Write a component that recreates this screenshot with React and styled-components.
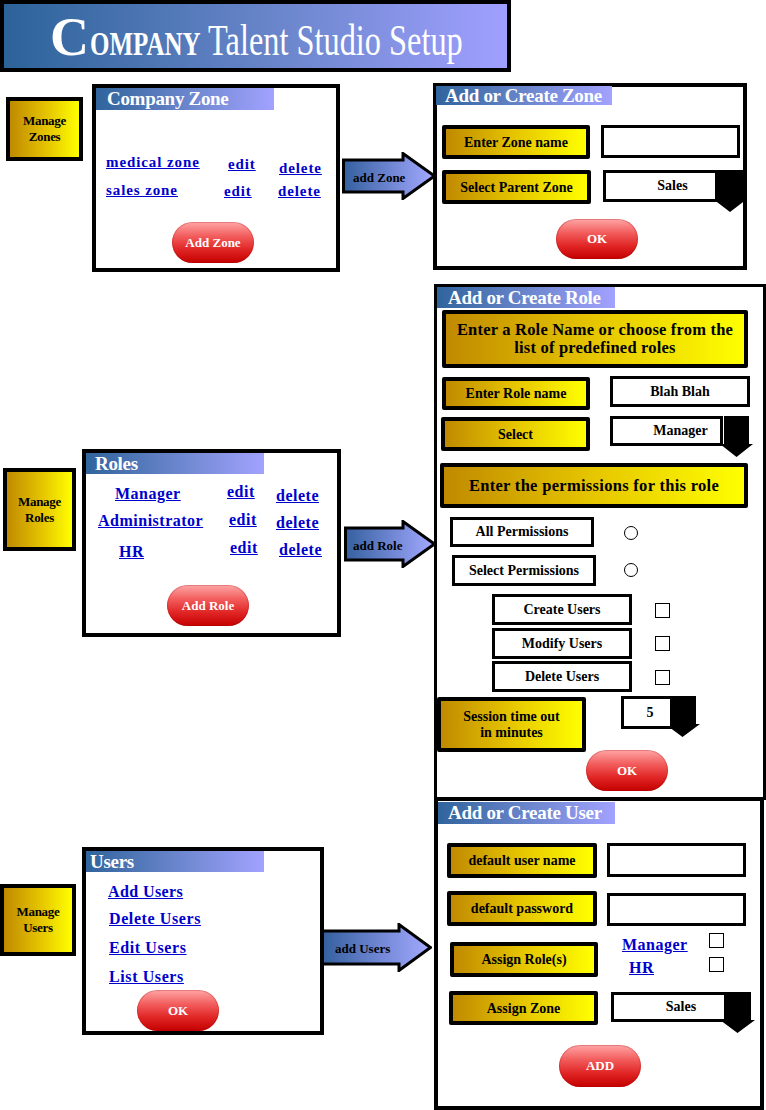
import React from 'react';
import styled, { createGlobalStyle, css } from 'styled-components';

const GlobalStyle = createGlobalStyle`
  html, body {
    margin: 0;
    padding: 0;
    background: #fff;
  }
  body {
    font-family: "Liberation Serif", "Times New Roman", serif;
    color: #000;
  }
`

// margins used to set each part where the mockup draws it
const place = css`
  margin-left: ${ props => props.$ml || 0 }px;
  margin-top: ${ props => props.$mt || 0 }px;
`

const Page = styled.div`
  width: 766px;
  height: 1110px;
  overflow: hidden;
`
const Header = styled.div`
  box-sizing: border-box;
  width: 511px;
  height: 72px;
  border: 4px solid #000;
  background: linear-gradient(to right, #2c6399, #6b86cc 55%, #a0a0ff);
  display: flex;
  align-items: baseline;
  padding: 7px 0 0 46px;
  color: #fff;
  white-space: nowrap;
  overflow: hidden;
`
const BigC = styled.span`
  font-size: 54px;
  font-weight: bold;
  line-height: 52px;
`
const Squeezed = styled.span`
  display: inline-block;
  transform: scaleX(0.735);
  transform-origin: left center;
  line-height: 44px;
  margin-left: 1px;
`
const Caps = styled.span`
  font-size: 34px;
  font-weight: bold;
`
const Plain = styled.span`
  font-size: 44px;
`

const Section = styled.div`
  display: flex;
  align-items: flex-start;
  height: ${ props => props.$h }px;
  margin-top: ${ props => props.$mt }px;
`
const SideButton = styled.div`
  ${place}
  flex-shrink: 0;
  box-sizing: border-box;
  width: ${ props => props.$w }px;
  height: ${ props => props.$h }px;
  border: 4px solid #000;
  background: linear-gradient(to right, #c08a00, #e6c600 55%, #ffff00);
  display: flex;
  align-items: center;
  justify-content: center;
  text-align: center;
  font-size: 13px;
  font-weight: bold;
  line-height: 16px;
  letter-spacing: -0.3px;
`
const Panel = styled.div`
  ${place}
  flex-shrink: 0;
  box-sizing: border-box;
  width: ${ props => props.$w }px;
  height: ${ props => props.$h }px;
  border: ${ props => props.$b || 4 }px solid #000;
  background: #fff;
  display: flex;
  flex-direction: column;
  align-items: flex-start;
`
const TitleBar = styled.div`
  ${place}
  box-sizing: border-box;
  width: ${ props => props.$w || 178 }px;
  height: ${ props => props.$h || 21 }px;
  line-height: ${ props => props.$h || 21 }px;
  padding-left: ${ props => props.$pl || 10 }px;
  background: linear-gradient(to right, #30649c, #6f88d0 55%, #a2a2ff);
  color: #fff;
  font-size: 19px;
  font-weight: bold;
  letter-spacing: -0.3px;
  white-space: nowrap;
`
const LinkRow = styled.div`
  ${place}
  display: grid;
  grid-template-columns: ${ props => props.$cols };
  align-items: start;
  height: ${ props => props.$h }px;
`
const Link = styled.a`
  display: block;
  justify-self: start;
  margin-left: ${ props => props.$dx || 0 }px;
  margin-top: ${ props => props.$dy || 0 }px;
  color: #0000cc;
  font-size: ${ props => props.$fs || 16 }px;
  line-height: ${ props => props.$lh || 19 }px;
  letter-spacing: ${ props => props.$ls ?? 0.5 }px;
  font-weight: bold;
  text-decoration: underline;
  white-space: nowrap;
  cursor: pointer;
`
const Pill = styled.div`
  ${place}
  flex-shrink: 0;
  width: 82px;
  height: ${ props => props.$h || 41 }px;
  border-radius: 21px;
  background: linear-gradient(to bottom, #ffa6a6 0%, #f25c5c 35%, #e02424 68%, #c40000 100%);
  box-shadow: inset 0 0 0 1px rgba(160, 0, 0, 0.25);
  color: #fff;
  font-size: 13px;
  font-weight: bold;
  display: flex;
  align-items: center;
  justify-content: center;
`
const ArrowWrap = styled.div`
  ${place}
  flex-shrink: 0;
  position: relative;
  z-index: 2;
  width: ${ props => props.$w }px;
  height: ${ props => props.$h }px;
  display: flex;
  align-items: center;
`
const ArrowSvg = styled.svg`
  position: absolute;
  left: 0;
  top: 0;
`
const ArrowLabel = styled.span`
  position: relative;
  padding-left: ${ props => props.$pl }px;
  margin-top: 3px;
  font-size: 13px;
  font-weight: bold;
  white-space: nowrap;
`
const FormRow = styled.div`
  ${place}
  display: flex;
  align-items: flex-start;
  height: ${ props => props.$h }px;
`
const LabelBox = styled.div`
  ${place}
  flex-shrink: 0;
  box-sizing: border-box;
  width: ${ props => props.$w }px;
  height: ${ props => props.$h }px;
  border: 4px solid #000;
  border-radius: 2px;
  background: linear-gradient(to right, #c08a00, #e6c600 50%, #ffff00);
  display: flex;
  align-items: center;
  justify-content: center;
  text-align: center;
  font-size: ${ props => props.$fs || 14 }px;
  line-height: ${ props => props.$lh || 17 }px;
  letter-spacing: ${ props => props.$ls || 0 }px;
  font-weight: bold;
  white-space: nowrap;
`
const Field = styled.div`
  ${place}
  flex-shrink: 0;
  position: relative;
  z-index: 1;
  box-sizing: border-box;
  width: ${ props => props.$w }px;
  height: ${ props => props.$h }px;
  padding-left: ${ props => props.$pl || 0 }px;
  border: 3px solid #000;
  background: #fff;
  display: flex;
  align-items: center;
  justify-content: center;
  font-size: 14px;
  font-weight: bold;
  white-space: nowrap;
`
const DropWrap = styled.div`
  ${place}
  flex-shrink: 0;
  display: flex;
  align-items: flex-start;
`
const DropArrowSvg = styled.svg`
  display: block;
  flex-shrink: 0;
  margin-left: ${ props => props.$ml }px;
`
const Radio = styled.div`
  ${place}
  flex-shrink: 0;
  box-sizing: border-box;
  width: 14px;
  height: 14px;
  border: 1px solid #000;
  border-radius: 50%;
  background: #fff;
`
const Check = styled.div`
  ${place}
  flex-shrink: 0;
  box-sizing: border-box;
  width: 15px;
  height: 15px;
  border: 1px solid #000;
  background: #fff;
`
const RoleChecks = styled.div`
  ${place}
  display: flex;
  flex-direction: column;
`
const RoleCheckRow = styled.div`
  display: grid;
  grid-template-columns: 87px 15px;
  align-items: start;
  height: 24px;
`

function FlowArrow({ id, ml, mt, w, h, pl, children }) {
  let hx = w - 33;
  let bt = Math.round(h / 6);
  let bb = h - bt;
  let points = `1.5,${ bt } ${ hx },${ bt } ${ hx },1.5 ${ w - 1.5 },${ h / 2 } ${ hx },${ h - 1.5 } ${ hx },${ bb } 1.5,${ bb }`;
  return (
    <ArrowWrap $ml={ml} $mt={mt} $w={w} $h={h}>
      <ArrowSvg width={w} height={h} viewBox={`0 0 ${ w } ${ h }`}>
        <defs>
          <linearGradient id={id} x1="0" x2="1" y1="0" y2="0">
            <stop offset="0" stopColor="#34609e" />
            <stop offset="0.55" stopColor="#7388d6" />
            <stop offset="1" stopColor="#a4aaff" />
          </linearGradient>
        </defs>
        <polygon points={points} fill={`url(#${ id })`} stroke="#000" strokeWidth="3" strokeLinejoin="miter" />
      </ArrowSvg>
      <ArrowLabel $pl={pl}>{ children }</ArrowLabel>
    </ArrowWrap>
  );
}

function Dropdown({ ml, mt, w, h, pl, aw, ah, aml, children }) {
  let base = ah - 13;
  let points = `4,0 ${ aw - 4 },0 ${ aw - 4 },${ base } ${ aw },${ base } ${ aw / 2 },${ ah } 0,${ base } 4,${ base }`;
  return (
    <DropWrap $ml={ml} $mt={mt}>
      <Field $w={w} $h={h} $pl={pl}>{ children }</Field>
      <DropArrowSvg $ml={aml} width={aw} height={ah} viewBox={`0 0 ${ aw } ${ ah }`}>
        <polygon points={points} fill="#000" />
      </DropArrowSvg>
    </DropWrap>
  );
}

export default function App() {
  return (
    <Page>
      <GlobalStyle />
      <Header>
        <BigC>C</BigC>
        <Squeezed>
          <Caps>OMPANY</Caps>
          <Plain> Talent Studio Setup</Plain>
        </Squeezed>
      </Header>

      {/* zones */}
      <Section $mt={11} $h={187}>
        <SideButton $ml={6} $mt={14} $w={77} $h={64}>Manage<br />Zones</SideButton>
        <Panel $ml={9} $mt={1} $w={248} $h={188}>
          <TitleBar $h={22} $pl={11}>Company Zone</TitleBar>
          <LinkRow $mt={43} $h={18} $cols="132px 51px auto">
            <Link $fs={15} $lh={18} $ls={0.9} $dx={10}>medical zone</Link>
            <Link $fs={15} $lh={18} $ls={0.9} $dy={2}>edit</Link>
            <Link $fs={15} $lh={18} $ls={0.9} $dy={6}>delete</Link>
          </LinkRow>
          <LinkRow $mt={10} $h={18} $cols="132px 51px auto">
            <Link $fs={15} $lh={18} $ls={0.9} $dx={10}>sales zone</Link>
            <Link $fs={15} $lh={18} $ls={0.9} $dx={-4} $dy={1}>edit</Link>
            <Link $fs={15} $lh={18} $ls={0.9} $dx={-1} $dy={1}>delete</Link>
          </LinkRow>
          <Pill $ml={76} $mt={23}>Add Zone</Pill>
        </Panel>
        <FlowArrow id="arrowZone" ml={2} mt={69} w={94} h={48} pl={11}>add Zone</FlowArrow>
        <Panel $ml={-3} $w={314} $h={187}>
          <TitleBar $ml={-1} $mt={-1} $w={176} $h={19} $pl={9}>Add or Create Zone</TitleBar>
          <FormRow $mt={20} $h={34}>
            <LabelBox $ml={5} $w={148} $h={34}>Enter Zone name</LabelBox>
            <Field $ml={11} $w={139} $h={33} />
          </FormRow>
          <FormRow $mt={11} $h={34}>
            <LabelBox $ml={5} $w={149} $h={34}>Select Parent Zone</LabelBox>
            <Dropdown ml={12} w={115} h={32} pl={24} aw={34} ah={42} aml={-5}>Sales</Dropdown>
          </FormRow>
          <Pill $ml={119} $mt={15} $h={40}>OK</Pill>
        </Panel>
      </Section>

      {/* roles */}
      <Section $mt={14} $h={516}>
        <SideButton $ml={3} $mt={184} $w={73} $h={83}>Manage<br />Roles</SideButton>
        <Panel $ml={6} $mt={165} $w={259} $h={188}>
          <TitleBar $pl={9}>Roles</TitleBar>
          <LinkRow $mt={10} $h={19} $cols="142px 48px auto">
            <Link $dx={29}>Manager</Link>
            <Link $dx={-1} $dy={-2}>edit</Link>
            <Link $dy={2}>delete</Link>
          </LinkRow>
          <LinkRow $mt={8} $h={19} $cols="142px 48px auto">
            <Link $dx={12}>Administrator</Link>
            <Link $dx={1} $dy={-1}>edit</Link>
            <Link $dy={2}>delete</Link>
          </LinkRow>
          <LinkRow $mt={12} $h={19} $cols="142px 48px auto">
            <Link $dx={33}>HR</Link>
            <Link $dx={2} $dy={-4}>edit</Link>
            <Link $dx={3} $dy={-2}>delete</Link>
          </LinkRow>
          <Pill $ml={81} $mt={24}>Add Role</Pill>
        </Panel>
        <FlowArrow id="arrowRole" ml={3} mt={236} w={92} h={48} pl={9}>add Role</FlowArrow>
        <Panel $ml={-2} $w={332} $h={516} $b={3}>
          <TitleBar $pl={11}>Add or Create Role</TitleBar>
          <LabelBox $ml={5} $mt={2} $w={306} $h={58} $fs={16.5} $lh={18} $ls={0.2}>
            Enter a Role Name or choose from the<br />list of predefined roles
          </LabelBox>
          <FormRow $mt={9} $h={33}>
            <LabelBox $ml={5} $w={148} $h={33}>Enter Role name</LabelBox>
            <Field $ml={20} $mt={-1} $w={140} $h={31}>Blah Blah</Field>
          </FormRow>
          <FormRow $mt={7} $h={34}>
            <LabelBox $ml={4} $w={149} $h={34}>Select</LabelBox>
            <Dropdown ml={20} mt={-1} w={113} h={30} pl={28} aw={33} ah={41} aml={-3}>Manager</Dropdown>
          </FormRow>
          <LabelBox $ml={3} $mt={12} $w={308} $h={45} $fs={16.5} $ls={0.3}>
            Enter the permissions for this role
          </LabelBox>
          <FormRow $mt={9} $h={30}>
            <Field $ml={13} $w={144} $h={30}>All Permissions</Field>
            <Radio $ml={30} $mt={9} />
          </FormRow>
          <FormRow $mt={8} $h={31}>
            <Field $ml={15} $w={144} $h={31}>Select Permissions</Field>
            <Radio $ml={28} $mt={8} />
          </FormRow>
          <FormRow $mt={8} $h={31}>
            <Field $ml={55} $w={140} $h={31}>Create Users</Field>
            <Check $ml={23} $mt={9} />
          </FormRow>
          <FormRow $mt={3} $h={31}>
            <Field $ml={55} $w={140} $h={31}>Modify Users</Field>
            <Check $ml={23} $mt={8} />
          </FormRow>
          <FormRow $mt={2} $h={31}>
            <Field $ml={55} $w={140} $h={31}>Delete Users</Field>
            <Check $ml={23} $mt={9} />
          </FormRow>
          <FormRow $mt={5} $h={55}>
            <LabelBox $w={149} $h={55} $lh={16}>Session time out<br />in minutes</LabelBox>
            <Dropdown ml={35} mt={-1} w={52} h={33} pl={6} aw={35} ah={41} aml={-8}>5</Dropdown>
          </FormRow>
          <Pill $ml={149} $mt={-2}>OK</Pill>
        </Panel>
      </Section>

      {/* users */}
      <Section $mt={-3} $h={313}>
        <SideButton $mt={87} $w={76} $h={72}>Manage<br />Users</SideButton>
        <Panel $ml={6} $mt={50} $w={242} $h={188}>
          <TitleBar $pl={4}>Users</TitleBar>
          <Link $dx={22} $dy={10} $ls={0.4}>Add Users</Link>
          <Link $dx={23} $dy={8} $ls={0.6}>Delete Users</Link>
          <Link $dx={23} $dy={10} $ls={0.6}>Edit Users</Link>
          <Link $dx={23} $dy={10} $ls={0.6}>List Users</Link>
          <Pill $ml={51} $mt={4}>OK</Pill>
        </Panel>
        <FlowArrow id="arrowUser" ml={-3} mt={126} w={111} h={49} pl={14}>add Users</FlowArrow>
        <Panel $ml={2} $w={330} $h={313}>
          <TitleBar $mt={1} $w={177} $h={22}>Add or Create User</TitleBar>
          <FormRow $mt={19} $h={35}>
            <LabelBox $ml={9} $w={150} $h={35}>default user name</LabelBox>
            <Field $ml={10} $w={139} $h={34} />
          </FormRow>
          <FormRow $mt={13} $h={35}>
            <LabelBox $ml={9} $w={150} $h={35}>default password</LabelBox>
            <Field $ml={10} $mt={2} $w={139} $h={33} />
          </FormRow>
          <FormRow $mt={16} $h={35}>
            <LabelBox $ml={12} $w={148} $h={35}>Assign Role(s)</LabelBox>
            <RoleChecks $ml={24} $mt={-9}>
              <RoleCheckRow>
                <Link $dy={2}>Manager</Link>
                <Check />
              </RoleCheckRow>
              <RoleCheckRow>
                <Link $dx={7} $dy={1}>HR</Link>
                <Check />
              </RoleCheckRow>
            </RoleChecks>
          </FormRow>
          <FormRow $mt={14} $h={34}>
            <LabelBox $ml={11} $w={149} $h={34}>Assign Zone</LabelBox>
            <Dropdown ml={13} mt={1} w={116} h={30} pl={24} aw={35} ah={41} aml={-7}>Sales</Dropdown>
          </FormRow>
          <Pill $ml={121} $mt={20} $h={42}>ADD</Pill>
        </Panel>
      </Section>
    </Page>
  );
}
